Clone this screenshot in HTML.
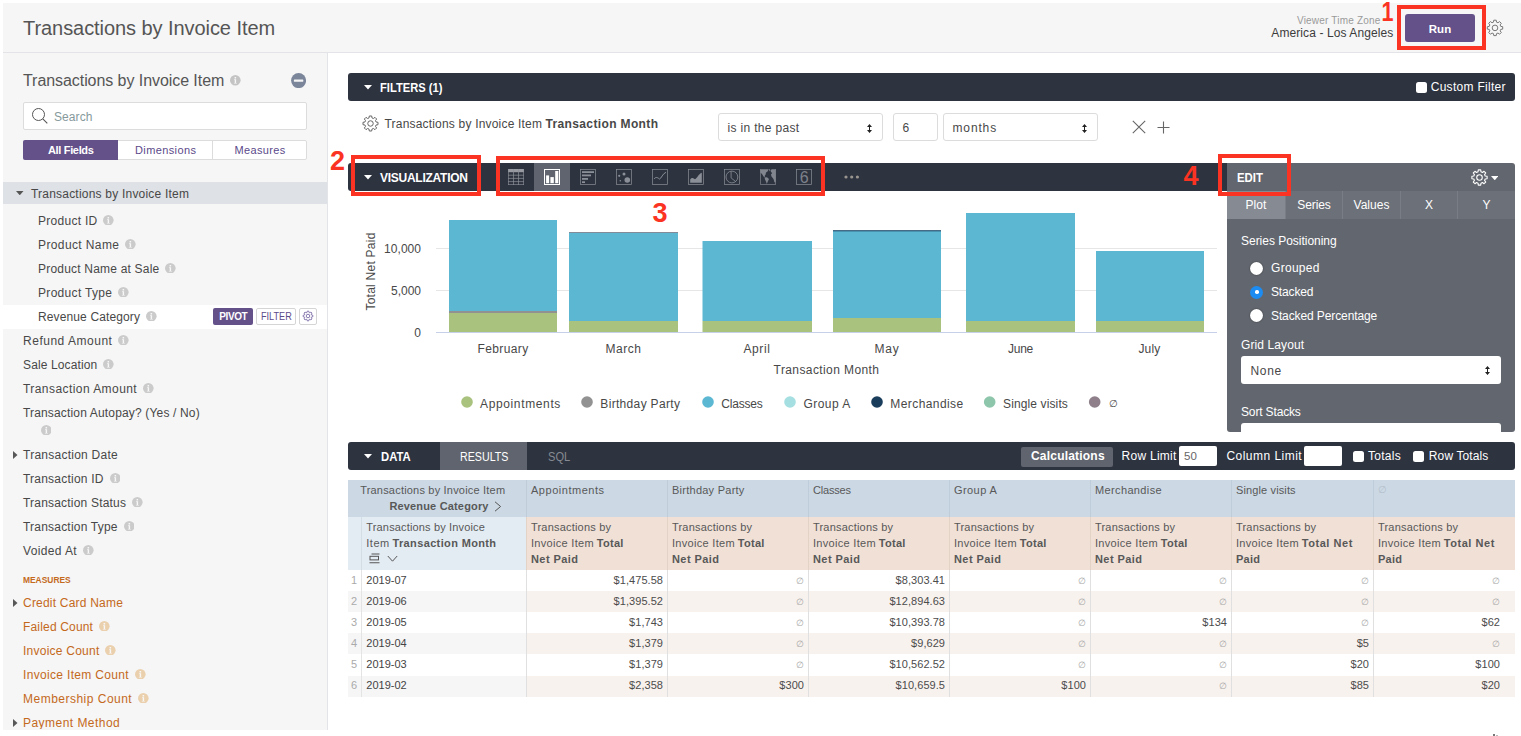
<!DOCTYPE html><html><head><meta charset="utf-8"><title>Transactions by Invoice Item</title><style>
*{box-sizing:border-box;margin:0;padding:0}
html,body{width:1521px;height:736px;overflow:hidden;background:#fff}
body{font-family:"Liberation Sans",sans-serif;font-size:12px;color:#444;position:relative}
.abs{position:absolute}
.nw{white-space:nowrap}
#hdr{left:3px;top:3px;width:1518px;height:50px;background:#f6f6f6;border-bottom:1px solid #e2e4e7}
#side{left:3px;top:53px;width:325px;height:677px;background:#f6f6f6;border-right:1px solid #e2e4e7}
.bar{background:#2d333f;height:28px;border-radius:3px;color:#fff}
.bt{font-weight:bold;font-size:12px;color:#fff;line-height:28px;top:1px}
.f{left:0;width:324px;height:24px;line-height:24px;font-size:12px;color:#484848;white-space:nowrap}
.f.m{color:#c4691c}
.f .i{display:inline-block;vertical-align:middle;margin-left:6px;position:relative;top:-1.8px}
.red{border:4px solid #fb3322}
.num{color:#fb3322;font-weight:bold;font-size:24px;line-height:24px}
.sel{background:#fff;border:1px solid #dcdcdc;border-radius:3px;height:28px;line-height:28px;font-size:12px;color:#484848}
.tab{top:191px;height:28px;line-height:28px;text-align:center;color:#fff;font-size:12px;background:#6c7078;border-left:1px solid #797d85}
.el{color:#fff;font-size:12px;line-height:14px}
.radio{width:13px;height:13px;border-radius:50%;background:#fff;box-shadow:0 0 1.5px rgba(0,0,0,.6)}
.cb{width:11px;height:11px;border-radius:2.5px;background:#fff}
.wl{color:#fff;font-size:12px;line-height:28px;top:0}
.c{font-size:11px;color:#4c4c4c;line-height:16px}
</style></head><body>
<div id="hdr" class="abs"></div>
<div class="abs nw" style="left:23px;top:15px;font-size:20px;line-height:26px;color:#555;letter-spacing:-0.063px;">Transactions by Invoice Item</div>
<div class="abs nw" style="left:1297px;top:15px;font-size:10px;line-height:12px;color:#9a9a9a;letter-spacing:0.193px;">Viewer Time Zone</div>
<div class="abs nw" style="left:1271.3px;top:26px;font-size:12px;line-height:15px;color:#3c3c3c;letter-spacing:0.095px;">America - Los Angeles</div>
<div class="abs" style="left:1405px;top:14px;width:70px;height:28px;background:#64518a;border-radius:3px;color:#fff;font-size:11.5px;font-weight:bold;text-align:center;line-height:30px">Run</div>
<svg class="abs" style="left:1485px;top:18px" width="20" height="20" viewBox="0 0 20 20" ><path d="M8.48 4.17 L8.78 2.20 L11.22 2.20 L11.52 4.17 L12.98 4.77 L14.58 3.59 L16.31 5.32 L15.13 6.92 L15.73 8.38 L17.70 8.68 L17.70 11.12 L15.73 11.42 L15.13 12.88 L16.31 14.48 L14.58 16.21 L12.98 15.03 L11.52 15.63 L11.22 17.60 L8.78 17.60 L8.48 15.63 L7.02 15.03 L5.42 16.21 L3.69 14.48 L4.87 12.88 L4.27 11.42 L2.30 11.12 L2.30 8.68 L4.27 8.38 L4.87 6.92 L3.69 5.32 L5.42 3.59 L7.02 4.77Z" fill="none" stroke="#777" stroke-width="1" stroke-linejoin="round"/><circle cx="10.00" cy="9.90" r="2.81" fill="none" stroke="#777" stroke-width="1"/></svg>
<div class="abs red" style="left:1397px;top:5px;width:89px;height:45px"></div>
<div class="abs num" style="left:1380px;top:-1px;font-size:27px;line-height:27px;transform:scaleX(.8);transform-origin:50% 50%">1</div>
<div id="side" class="abs"></div>
<div class="abs nw" style="left:23px;top:70px;font-size:16px;line-height:22px;color:#555;letter-spacing:-0.065px;">Transactions by Invoice Item</div>
<svg class="abs" style="left:230.4px;top:75.4px" width="10.6" height="10.6" viewBox="0 0 10.6 10.6" ><circle cx="5.3" cy="5.3" r="5.3" fill="#c4c4c4"/><path d="M4.1 4.3 H6.1 V7.9 H6.9 V8.6 H3.9 V7.9 H4.7 V5 H4.1Z M4.6 2.1 H6.1 V3.5 H4.6Z" fill="#f7f7f7"/></svg>
<svg class="abs" style="left:290.5px;top:72.6px" width="15.2" height="15.2" viewBox="0 0 15.2 15.2" ><circle cx="7.6" cy="7.6" r="7.5" fill="#7b869b"/><rect x="2.9" y="6.5" width="9.4" height="2.2" rx=".4" fill="#f5f5f5"/></svg>
<div class="abs" style="left:23px;top:102px;width:284px;height:28px;background:#fff;border:1px solid #dcdcdc;border-radius:2px"></div>
<svg class="abs" style="left:31px;top:107px" width="18" height="18" viewBox="0 0 18 18" ><circle cx="7.5" cy="7.5" r="6" fill="none" stroke="#555" stroke-width="1"/><path d="M11.8 11.8 L16.3 16.3" stroke="#555" stroke-width="1.1"/></svg>
<div class="abs nw" style="left:54px;top:109px;font-size:12px;line-height:16px;color:#869a9c;letter-spacing:0.086px;">Search</div>
<div class="abs" style="left:23px;top:140px;width:284px;height:20px;background:#fff;border:1px solid #dcdcdc;border-radius:2px"></div>
<div class="abs" style="left:23px;top:140px;width:95px;height:20px;background:#64518a;border-radius:2px 0 0 2px"></div>
<div class="abs" style="left:212px;top:140px;width:1px;height:20px;background:#dcdcdc"></div>
<div class="abs nw" style="left:48px;top:140px;font-size:11px;line-height:20px;font-weight:bold;color:#fff;letter-spacing:-0.336px;">All Fields</div>
<div class="abs nw" style="left:135px;top:140px;font-size:11px;line-height:20px;color:#5b4a8a;letter-spacing:0.379px;">Dimensions</div>
<div class="abs nw" style="left:234.5px;top:140px;font-size:11px;line-height:20px;color:#5b4a8a;letter-spacing:0.333px;">Measures</div>
<div class="abs" style="left:3px;top:182px;width:324px;height:22px;background:#dee1e5"></div>
<svg class="abs" style="left:16.3px;top:191px" width="7.5" height="4.3" viewBox="0 0 7.5 4.3" ><path d="M0 0 H7.5 L3.75 4.3 Z" fill="#555"/></svg>
<div class="abs nw" style="left:31px;top:183px;font-size:12px;line-height:22px;color:#484848;letter-spacing:0.21px;">Transactions by Invoice Item</div>
<div class="abs" style="left:3px;top:305px;width:324px;height:24px;background:#fff"></div>
<div class="abs f" style="top:209px;padding-left:38px;letter-spacing:0.279px;">Product ID<svg class="i" width="10.6" height="10.6" viewBox="0 0 10.6 10.6"><circle cx="5.3" cy="5.3" r="5.3" fill="#cbcbcb"/><path d="M4.1 4.3 H6.1 V7.9 H6.9 V8.6 H3.9 V7.9 H4.7 V5 H4.1Z M4.6 2.1 H6.1 V3.5 H4.6Z" fill="#f7f7f7"/></svg></div>
<div class="abs f" style="top:233px;padding-left:38px;letter-spacing:0.387px;">Product Name<svg class="i" width="10.6" height="10.6" viewBox="0 0 10.6 10.6"><circle cx="5.3" cy="5.3" r="5.3" fill="#cbcbcb"/><path d="M4.1 4.3 H6.1 V7.9 H6.9 V8.6 H3.9 V7.9 H4.7 V5 H4.1Z M4.6 2.1 H6.1 V3.5 H4.6Z" fill="#f7f7f7"/></svg></div>
<div class="abs f" style="top:257px;padding-left:38px;letter-spacing:0.2px;">Product Name at Sale<svg class="i" width="10.6" height="10.6" viewBox="0 0 10.6 10.6"><circle cx="5.3" cy="5.3" r="5.3" fill="#cbcbcb"/><path d="M4.1 4.3 H6.1 V7.9 H6.9 V8.6 H3.9 V7.9 H4.7 V5 H4.1Z M4.6 2.1 H6.1 V3.5 H4.6Z" fill="#f7f7f7"/></svg></div>
<div class="abs f" style="top:281px;padding-left:38px;letter-spacing:0.315px;">Product Type<svg class="i" width="10.6" height="10.6" viewBox="0 0 10.6 10.6"><circle cx="5.3" cy="5.3" r="5.3" fill="#cbcbcb"/><path d="M4.1 4.3 H6.1 V7.9 H6.9 V8.6 H3.9 V7.9 H4.7 V5 H4.1Z M4.6 2.1 H6.1 V3.5 H4.6Z" fill="#f7f7f7"/></svg></div>
<div class="abs f" style="top:305px;padding-left:38px;letter-spacing:0.126px;">Revenue Category<svg class="i" width="10.6" height="10.6" viewBox="0 0 10.6 10.6"><circle cx="5.3" cy="5.3" r="5.3" fill="#cbcbcb"/><path d="M4.1 4.3 H6.1 V7.9 H6.9 V8.6 H3.9 V7.9 H4.7 V5 H4.1Z M4.6 2.1 H6.1 V3.5 H4.6Z" fill="#f7f7f7"/></svg></div>
<div class="abs f" style="top:329px;padding-left:23px;letter-spacing:0.519px;">Refund Amount<svg class="i" width="10.6" height="10.6" viewBox="0 0 10.6 10.6"><circle cx="5.3" cy="5.3" r="5.3" fill="#cbcbcb"/><path d="M4.1 4.3 H6.1 V7.9 H6.9 V8.6 H3.9 V7.9 H4.7 V5 H4.1Z M4.6 2.1 H6.1 V3.5 H4.6Z" fill="#f7f7f7"/></svg></div>
<div class="abs f" style="top:353px;padding-left:23px;letter-spacing:0.123px;">Sale Location<svg class="i" width="10.6" height="10.6" viewBox="0 0 10.6 10.6"><circle cx="5.3" cy="5.3" r="5.3" fill="#cbcbcb"/><path d="M4.1 4.3 H6.1 V7.9 H6.9 V8.6 H3.9 V7.9 H4.7 V5 H4.1Z M4.6 2.1 H6.1 V3.5 H4.6Z" fill="#f7f7f7"/></svg></div>
<div class="abs f" style="top:377px;padding-left:23px;letter-spacing:0.437px;">Transaction Amount<svg class="i" width="10.6" height="10.6" viewBox="0 0 10.6 10.6"><circle cx="5.3" cy="5.3" r="5.3" fill="#cbcbcb"/><path d="M4.1 4.3 H6.1 V7.9 H6.9 V8.6 H3.9 V7.9 H4.7 V5 H4.1Z M4.6 2.1 H6.1 V3.5 H4.6Z" fill="#f7f7f7"/></svg></div>
<div class="abs f" style="top:401px;padding-left:23px;letter-spacing:0.161px;">Transaction Autopay? (Yes / No)</div>
<div class="abs f" style="top:443px;padding-left:23px;letter-spacing:0.251px;">Transaction Date</div>
<svg class="abs" style="left:13px;top:450.5px" width="5" height="8" viewBox="0 0 5 8" ><path d="M0 0 L4.5 4 L0 8Z" fill="#585858"/></svg>
<div class="abs f" style="top:467px;padding-left:23px;letter-spacing:0.22px;">Transaction ID<svg class="i" width="10.6" height="10.6" viewBox="0 0 10.6 10.6"><circle cx="5.3" cy="5.3" r="5.3" fill="#cbcbcb"/><path d="M4.1 4.3 H6.1 V7.9 H6.9 V8.6 H3.9 V7.9 H4.7 V5 H4.1Z M4.6 2.1 H6.1 V3.5 H4.6Z" fill="#f7f7f7"/></svg></div>
<div class="abs f" style="top:491px;padding-left:23px;letter-spacing:0.197px;">Transaction Status<svg class="i" width="10.6" height="10.6" viewBox="0 0 10.6 10.6"><circle cx="5.3" cy="5.3" r="5.3" fill="#cbcbcb"/><path d="M4.1 4.3 H6.1 V7.9 H6.9 V8.6 H3.9 V7.9 H4.7 V5 H4.1Z M4.6 2.1 H6.1 V3.5 H4.6Z" fill="#f7f7f7"/></svg></div>
<div class="abs f" style="top:515px;padding-left:23px;letter-spacing:0.205px;">Transaction Type<svg class="i" width="10.6" height="10.6" viewBox="0 0 10.6 10.6"><circle cx="5.3" cy="5.3" r="5.3" fill="#cbcbcb"/><path d="M4.1 4.3 H6.1 V7.9 H6.9 V8.6 H3.9 V7.9 H4.7 V5 H4.1Z M4.6 2.1 H6.1 V3.5 H4.6Z" fill="#f7f7f7"/></svg></div>
<div class="abs f" style="top:539px;padding-left:23px;letter-spacing:0.368px;">Voided At<svg class="i" width="10.6" height="10.6" viewBox="0 0 10.6 10.6"><circle cx="5.3" cy="5.3" r="5.3" fill="#cbcbcb"/><path d="M4.1 4.3 H6.1 V7.9 H6.9 V8.6 H3.9 V7.9 H4.7 V5 H4.1Z M4.6 2.1 H6.1 V3.5 H4.6Z" fill="#f7f7f7"/></svg></div>
<div class="abs f m" style="top:591px;padding-left:23px;letter-spacing:0.21px;">Credit Card Name</div>
<svg class="abs" style="left:13px;top:598.5px" width="5" height="8" viewBox="0 0 5 8" ><path d="M0 0 L4.5 4 L0 8Z" fill="#585858"/></svg>
<div class="abs f m" style="top:615px;padding-left:23px;letter-spacing:0.174px;">Failed Count<svg class="i" width="10.6" height="10.6" viewBox="0 0 10.6 10.6"><circle cx="5.3" cy="5.3" r="5.3" fill="#ebd0ae"/><path d="M4.1 4.3 H6.1 V7.9 H6.9 V8.6 H3.9 V7.9 H4.7 V5 H4.1Z M4.6 2.1 H6.1 V3.5 H4.6Z" fill="#f7f7f7"/></svg></div>
<div class="abs f m" style="top:639px;padding-left:23px;letter-spacing:0.239px;">Invoice Count<svg class="i" width="10.6" height="10.6" viewBox="0 0 10.6 10.6"><circle cx="5.3" cy="5.3" r="5.3" fill="#ebd0ae"/><path d="M4.1 4.3 H6.1 V7.9 H6.9 V8.6 H3.9 V7.9 H4.7 V5 H4.1Z M4.6 2.1 H6.1 V3.5 H4.6Z" fill="#f7f7f7"/></svg></div>
<div class="abs f m" style="top:663px;padding-left:23px;letter-spacing:0.332px;">Invoice Item Count<svg class="i" width="10.6" height="10.6" viewBox="0 0 10.6 10.6"><circle cx="5.3" cy="5.3" r="5.3" fill="#ebd0ae"/><path d="M4.1 4.3 H6.1 V7.9 H6.9 V8.6 H3.9 V7.9 H4.7 V5 H4.1Z M4.6 2.1 H6.1 V3.5 H4.6Z" fill="#f7f7f7"/></svg></div>
<div class="abs f m" style="top:687px;padding-left:23px;letter-spacing:0.488px;">Membership Count<svg class="i" width="10.6" height="10.6" viewBox="0 0 10.6 10.6"><circle cx="5.3" cy="5.3" r="5.3" fill="#ebd0ae"/><path d="M4.1 4.3 H6.1 V7.9 H6.9 V8.6 H3.9 V7.9 H4.7 V5 H4.1Z M4.6 2.1 H6.1 V3.5 H4.6Z" fill="#f7f7f7"/></svg></div>
<div class="abs f m" style="top:711px;padding-left:23px;letter-spacing:0.461px;height:18px;overflow:hidden;">Payment Method</div>
<svg class="abs" style="left:13px;top:718.5px" width="5" height="8" viewBox="0 0 5 8" ><path d="M0 0 L4.5 4 L0 8Z" fill="#585858"/></svg>
<svg class="abs" style="left:40.5px;top:424.7px" width="10.6" height="10.6" viewBox="0 0 10.6 10.6" ><circle cx="5.3" cy="5.3" r="5.3" fill="#cbcbcb"/><path d="M4.1 4.3 H6.1 V7.9 H6.9 V8.6 H3.9 V7.9 H4.7 V5 H4.1Z M4.6 2.1 H6.1 V3.5 H4.6Z" fill="#f7f7f7"/></svg>
<div class="abs nw" style="left:23.3px;top:574px;font-size:9px;transform:scaleX(0.935);transform-origin:0 50%;line-height:12px;font-weight:bold;color:#c4691c;">MEASURES</div>
<div class="abs" style="left:213px;top:308px;width:40px;height:17px;background:#64518a;border-radius:2px"></div>
<div class="abs nw" style="left:219.2px;top:307.5px;font-size:10px;line-height:17px;font-weight:bold;color:#fff;letter-spacing:-0.379px;">PIVOT</div>
<div class="abs" style="left:256px;top:308px;width:40px;height:17px;background:#fff;border:1px solid #d5d5d5;border-radius:2px"></div>
<div class="abs nw" style="left:261px;top:307.5px;font-size:10px;transform:scaleX(0.913);transform-origin:0 50%;line-height:17px;color:#5b4a8a;">FILTER</div>
<div class="abs" style="left:299px;top:308px;width:18px;height:17px;background:#fff;border:1px solid #d5d5d5;border-radius:2px"></div>
<svg class="abs" style="left:302px;top:310.3px" width="12" height="12" viewBox="0 0 12 12" ><path d="M5.05 2.40 L5.23 1.16 L6.77 1.16 L6.95 2.40 L7.87 2.78 L8.88 2.04 L9.96 3.12 L9.22 4.13 L9.60 5.05 L10.84 5.23 L10.84 6.77 L9.60 6.95 L9.22 7.87 L9.96 8.88 L8.88 9.96 L7.87 9.22 L6.95 9.60 L6.77 10.84 L5.23 10.84 L5.05 9.60 L4.13 9.22 L3.12 9.96 L2.04 8.88 L2.78 7.87 L2.40 6.95 L1.16 6.77 L1.16 5.23 L2.40 5.05 L2.78 4.13 L2.04 3.12 L3.12 2.04 L4.13 2.78Z" fill="none" stroke="#7a6aa6" stroke-width="0.9" stroke-linejoin="round"/><circle cx="6.00" cy="6.00" r="1.76" fill="none" stroke="#7a6aa6" stroke-width="0.9"/></svg>
<div class="abs bar" style="left:348px;top:73px;width:1167px"><svg class="abs" style="left:16px;top:12px" width="8" height="4.5" viewBox="0 0 8 4.5" ><path d="M0 0 H8 L4.0 4.5 Z" fill="#fff"/></svg><div class="abs nw" style="left:32px;top:1px;font-size:12px;transform:scaleX(0.931);transform-origin:0 50%;line-height:28px;font-weight:bold;color:#fff;">FILTERS (1)</div><div class="abs cb" style="left:1067.5px;top:8.5px"></div><div class="abs nw" style="left:1082.7px;top:0px;font-size:12px;line-height:28px;color:#fff;letter-spacing:0.293px;">Custom Filter</div></div>
<svg class="abs" style="left:360.5px;top:113.5px" width="19" height="19" viewBox="0 0 19 19" ><path d="M8.02 3.92 L8.31 1.99 L10.69 1.99 L10.98 3.92 L12.40 4.51 L13.97 3.35 L15.65 5.03 L14.49 6.60 L15.08 8.02 L17.01 8.31 L17.01 10.69 L15.08 10.98 L14.49 12.40 L15.65 13.97 L13.97 15.65 L12.40 14.49 L10.98 15.08 L10.69 17.01 L8.31 17.01 L8.02 15.08 L6.60 14.49 L5.03 15.65 L3.35 13.97 L4.51 12.40 L3.92 10.98 L1.99 10.69 L1.99 8.31 L3.92 8.02 L4.51 6.60 L3.35 5.03 L5.03 3.35 L6.60 4.51Z" fill="none" stroke="#666" stroke-width="1" stroke-linejoin="round"/><circle cx="9.50" cy="9.50" r="2.74" fill="none" stroke="#666" stroke-width="1"/></svg>
<div class="abs nw" style="left:384.5px;top:116px;font-size:12px;line-height:16px;color:#484848;letter-spacing:0.191px;">Transactions by Invoice Item</div>
<div class="abs nw" style="left:545.5px;top:116px;font-size:12px;line-height:16px;font-weight:bold;color:#484848;letter-spacing:0.362px;">Transaction Month</div>
<div class="abs sel" style="left:718px;top:113px;width:165px;padding-left:8.5px;letter-spacing:0.33px">is in the past<svg class="abs" style="left:148px;top:9.5px" width="5" height="9" viewBox="0 0 5 9"><path d="M2.5 0 L5 3 L3 3 L3 6 L5 6 L2.5 9 L0 6 L2 6 L2 3 L0 3Z" fill="#222"/></svg></div>
<div class="abs sel" style="left:893px;top:113px;width:45px;padding-left:8.5px">6</div>
<div class="abs sel" style="left:943px;top:113px;width:155px;padding-left:8.5px;letter-spacing:0.86px">months<svg class="abs" style="left:138px;top:9.5px" width="5" height="9" viewBox="0 0 5 9"><path d="M2.5 0 L5 3 L3 3 L3 6 L5 6 L2.5 9 L0 6 L2 6 L2 3 L0 3Z" fill="#222"/></svg></div>
<svg class="abs" style="left:1132px;top:120px" width="14" height="14" viewBox="0 0 14 14" ><path d="M.8 .8 L13.2 13.2 M13.2 .8 L.8 13.2" stroke="#666" stroke-width="1.1"/></svg>
<svg class="abs" style="left:1157px;top:120.5px" width="13" height="13" viewBox="0 0 13 13" ><path d="M6.5 .5 V12.5 M.5 6.5 H12.5" stroke="#666" stroke-width="1.1"/></svg>
<div class="abs bar" style="left:348px;top:163px;width:879px;border-radius:3px 0 0 3px"><svg class="abs" style="left:16px;top:12px" width="8" height="4.5" viewBox="0 0 8 4.5" ><path d="M0 0 H8 L4.0 4.5 Z" fill="#fff"/></svg><div class="abs nw" style="left:32px;top:1px;font-size:12px;line-height:28px;font-weight:bold;color:#fff;letter-spacing:-0.262px;">VISUALIZATION</div><div class="abs" style="left:186px;top:0;width:36px;height:28px;background:#5f646e"></div></div>
<svg class="abs" style="left:508px;top:169px" width="16" height="16" viewBox="0 0 16 16" ><rect x="0" y="0" width="16" height="3.2" fill="#979aa1"/><path d="M0 6.2 H16" stroke="#8b8f97" stroke-width=".7"/><path d="M0 9.4 H16" stroke="#8b8f97" stroke-width=".7"/><path d="M0 12.6 H16" stroke="#8b8f97" stroke-width=".7"/><path d="M0 15.6 H16" stroke="#8b8f97" stroke-width=".7"/><path d="M0.4 0 V16" stroke="#8b8f97" stroke-width=".7"/><path d="M5.5 0 V16" stroke="#8b8f97" stroke-width=".7"/><path d="M10.5 0 V16" stroke="#8b8f97" stroke-width=".7"/><path d="M15.6 0 V16" stroke="#8b8f97" stroke-width=".7"/></svg>
<svg class="abs" style="left:544px;top:169px" width="16" height="16" viewBox="0 0 16 16" ><rect x=".5" y=".5" width="15" height="15" fill="none" stroke="#fff" stroke-width="1"/><rect x="2.1" y="6.4" width="3" height="7.8" fill="#fff"/><rect x="6.4" y="8.1" width="3.4" height="6.1" fill="#fff"/><rect x="11.2" y="2" width="3.1" height="12.2" fill="#fff"/></svg>
<svg class="abs" style="left:580px;top:169px" width="16" height="16" viewBox="0 0 16 16" ><rect x=".4" y=".4" width="15.2" height="15.2" fill="none" stroke="#8b8f97" stroke-width=".7"/><rect x="2" y="2.2" width="12" height="1.8" fill="#8b8f97"/><rect x="2" y="5.5" width="9" height="1.8" fill="#8b8f97"/><rect x="2" y="9" width="6" height="1.8" fill="#8b8f97"/><rect x="2" y="12.3" width="3" height="1.7" fill="#8b8f97"/></svg>
<svg class="abs" style="left:616px;top:169px" width="16" height="16" viewBox="0 0 16 16" ><rect x=".5" y=".5" width="15" height="15" fill="none" stroke="#8b8f97" stroke-width=".7"/><circle cx="11.3" cy="11" r="2.8" fill="#8b8f97"/><circle cx="8" cy="5" r="1.5" fill="#8b8f97"/><circle cx="3.2" cy="6.8" r="1.1" fill="#8b8f97"/><circle cx="4.3" cy="11.8" r=".8" fill="#8b8f97"/></svg>
<svg class="abs" style="left:652px;top:169px" width="16" height="16" viewBox="0 0 16 16" ><rect x=".5" y=".5" width="15" height="15" fill="none" stroke="#8b8f97" stroke-width=".7"/><path d="M2 10 C4 7.5 5.5 8.5 7.5 10 C9.5 9.5 10.5 4.5 14 3.3" fill="none" stroke="#8b8f97" stroke-width="1"/></svg>
<svg class="abs" style="left:688px;top:169px" width="16" height="16" viewBox="0 0 16 16" ><rect x=".5" y=".5" width="15" height="15" fill="none" stroke="#8b8f97" stroke-width=".7"/><path d="M2.2 13.8 V10.5 C4 8 5.5 9 7 10.2 C9 9.5 10.5 5 13.8 3.8 V13.8Z" fill="#8b8f97"/></svg>
<svg class="abs" style="left:724px;top:169px" width="16" height="16" viewBox="0 0 16 16" ><rect x=".4" y=".4" width="15.2" height="15.2" fill="none" stroke="#8b8f97" stroke-width=".7"/><circle cx="7.9" cy="8" r="5.9" fill="none" stroke="#8b8f97" stroke-width=".8"/><path d="M7.1 2.3 V8.9 L11.7 12.6" fill="none" stroke="#8b8f97" stroke-width=".8"/></svg>
<svg class="abs" style="left:760px;top:169px" width="16" height="16" viewBox="0 0 16 16" ><path d="M.4 0 V15.6 H15.6 V0" fill="none" stroke="#8b8f97" stroke-width=".7"/><path d="M.4 .3 H8.6 L7.5 2.5 L6 3.5 L5.6 5.5 L4.6 7 L5.2 8.6 L3.5 7.5 L2 5 L.4 3.6Z M8.8 .3 H10.2 L9.2 2.4Z M4.6 8.6 L7 8.2 L9 10 L8 12 L6.8 15 L6 12.5 L5 10.5Z M10.5 1 L12 .3 H15.6 V13 L14.5 13.6 L13.5 10 L11.5 7.6 L11 5.5 L12.2 4 L11 3Z" fill="#8b8f97" fill-opacity=".9"/></svg>
<svg class="abs" style="left:796px;top:169px" width="16" height="16" viewBox="0 0 16 16" ><rect x=".5" y=".5" width="15" height="15" fill="none" stroke="#8b8f97" stroke-width=".7"/><text x="8.2" y="13.9" font-family="Liberation Sans,sans-serif" font-size="16" fill="#7d818a" text-anchor="middle">6</text></svg>
<svg class="abs" style="left:844px;top:175px" width="17" height="4" viewBox="0 0 17 4" ><circle cx="2" cy="2" r="1.6" fill="#9a958f"/><circle cx="7.7" cy="2" r="1.6" fill="#9a958f"/><circle cx="13.4" cy="2" r="1.6" fill="#9a958f"/></svg>
<div class="abs red" style="left:351px;top:155px;width:130px;height:41px"></div>
<div class="abs red" style="left:496px;top:156px;width:329px;height:40px"></div>
<div class="abs num" style="left:330px;top:148px;font-size:27px;line-height:27px">2</div>
<div class="abs num" style="left:652.5px;top:200px;font-size:27px;line-height:27px">3</div>
<div class="abs num" style="left:1183.5px;top:162.5px;font-size:27px;line-height:27px">4</div>
<svg class="abs" style="left:0;top:0" width="1227" height="440" viewBox="0 0 1227 440"><g stroke="#e6e6e6" stroke-width="1"><path d="M436 248.5 H1217 M436 290.5 H1217"/></g><rect x="449" y="220" width="108" height="93" fill="#5cb7d3"/><rect x="449" y="313" width="108" height="19.0" fill="#a9c27d"/><rect x="449" y="311" width="108" height="2" fill="#919191"/><rect x="569" y="232" width="109" height="89" fill="#5cb7d3"/><rect x="569" y="321" width="109" height="11.0" fill="#a9c27d"/><rect x="569" y="232" width="109" height="0.8" fill="#8e7f8a"/><rect x="702.5" y="241" width="109.5" height="80" fill="#5cb7d3"/><rect x="702.5" y="321" width="109.5" height="11.0" fill="#a9c27d"/><rect x="833" y="230.5" width="108" height="87.5" fill="#5cb7d3"/><rect x="833" y="318" width="108" height="14.0" fill="#a9c27d"/><rect x="833" y="230.3" width="108" height="1.0" fill="#1b3d5c"/><rect x="966" y="213" width="109" height="108" fill="#5cb7d3"/><rect x="966" y="321" width="109" height="11.0" fill="#a9c27d"/><rect x="1096" y="251" width="108" height="70" fill="#5cb7d3"/><rect x="1096" y="321" width="108" height="11.0" fill="#a9c27d"/><path d="M436 332.5 H1217" stroke="#c6d0e8" stroke-width="1"/><text x="421" y="252.5" text-anchor="end" font-family="Liberation Sans,sans-serif" font-size="12" fill="#484848" letter-spacing="0.031" >10,000</text><text x="421" y="294.5" text-anchor="end" font-family="Liberation Sans,sans-serif" font-size="12" fill="#484848" letter-spacing="-0.018" >5,000</text><text x="421" y="336.5" text-anchor="end" font-family="Liberation Sans,sans-serif" font-size="12" fill="#484848" letter-spacing="0" >0</text><text x="503" y="353" text-anchor="middle" font-family="Liberation Sans,sans-serif" font-size="12" fill="#484848" letter-spacing="0.376" >February</text><text x="623.5" y="353" text-anchor="middle" font-family="Liberation Sans,sans-serif" font-size="12" fill="#484848" letter-spacing="0.579" >March</text><text x="757" y="353" text-anchor="middle" font-family="Liberation Sans,sans-serif" font-size="12" fill="#484848" letter-spacing="0.636" >April</text><text x="887" y="353" text-anchor="middle" font-family="Liberation Sans,sans-serif" font-size="12" fill="#484848" letter-spacing="0.844" >May</text><text x="1020.5" y="353" text-anchor="middle" font-family="Liberation Sans,sans-serif" font-size="12" fill="#484848" letter-spacing="-0.224" >June</text><text x="1149.5" y="353" text-anchor="middle" font-family="Liberation Sans,sans-serif" font-size="12" fill="#484848" letter-spacing="0.205" >July</text><text x="826.5" y="373.5" text-anchor="middle" font-family="Liberation Sans,sans-serif" font-size="12" fill="#484848" letter-spacing="0.401" >Transaction Month</text><text x="0" y="0" text-anchor="middle" font-family="Liberation Sans,sans-serif" font-size="12" fill="#484848" letter-spacing="0.249" transform="translate(375,271.5) rotate(-90)">Total Net Paid</text><circle cx="467" cy="402" r="5.8" fill="#a9c27d"/><text x="480" y="407.5" text-anchor="start" font-family="Liberation Sans,sans-serif" font-size="12" fill="#484848" letter-spacing="0.634" >Appointments</text><circle cx="587" cy="402" r="5.8" fill="#929292"/><text x="600.3" y="407.5" text-anchor="start" font-family="Liberation Sans,sans-serif" font-size="12" fill="#484848" letter-spacing="0.33" >Birthday Party</text><circle cx="708" cy="402" r="5.8" fill="#5cb7d3"/><text x="721.3" y="407.5" text-anchor="start" font-family="Liberation Sans,sans-serif" font-size="12" fill="#484848" letter-spacing="-0.188" >Classes</text><circle cx="790" cy="402" r="5.8" fill="#a6dfe1"/><text x="803.4" y="407.5" text-anchor="start" font-family="Liberation Sans,sans-serif" font-size="12" fill="#484848" letter-spacing="0.488" >Group A</text><circle cx="877" cy="402" r="5.8" fill="#1b3d5c"/><text x="890.3" y="407.5" text-anchor="start" font-family="Liberation Sans,sans-serif" font-size="12" fill="#484848" letter-spacing="0.416" >Merchandise</text><circle cx="989.7" cy="402" r="5.8" fill="#8ec6ac"/><text x="1003" y="407.5" text-anchor="start" font-family="Liberation Sans,sans-serif" font-size="12" fill="#484848" letter-spacing="0.125" >Single visits</text><circle cx="1094.7" cy="402" r="5.8" fill="#8e7f8a"/><text x="1108.5" y="407" font-family="Liberation Sans,sans-serif" font-size="10" fill="#484848">∅</text></svg>
<div class="abs" style="left:1227px;top:163px;width:288px;height:269px;background:#62666e;border-radius:0 3px 3px 3px;overflow:hidden"><div class="abs" style="left:14px;top:259.5px;width:260px;height:28px;background:#fff;border-radius:3px"></div></div>
<div class="abs nw" style="left:1237.4px;top:164px;font-size:12px;transform:scaleX(0.949);transform-origin:0 50%;line-height:28px;font-weight:bold;color:#fff;">EDIT</div>
<svg class="abs" style="left:1470px;top:167.5px" width="19" height="19" viewBox="0 0 19 19" ><path d="M8.00 3.84 L8.30 1.89 L10.70 1.89 L11.00 3.84 L12.44 4.44 L14.03 3.27 L15.73 4.97 L14.56 6.56 L15.16 8.00 L17.11 8.30 L17.11 10.70 L15.16 11.00 L14.56 12.44 L15.73 14.03 L14.03 15.73 L12.44 14.56 L11.00 15.16 L10.70 17.11 L8.30 17.11 L8.00 15.16 L6.56 14.56 L4.97 15.73 L3.27 14.03 L4.44 12.44 L3.84 11.00 L1.89 10.70 L1.89 8.30 L3.84 8.00 L4.44 6.56 L3.27 4.97 L4.97 3.27 L6.56 4.44Z" fill="none" stroke="#fff" stroke-width="1.1" stroke-linejoin="round"/><circle cx="9.50" cy="9.50" r="2.77" fill="none" stroke="#fff" stroke-width="1.1"/></svg>
<svg class="abs" style="left:1490.5px;top:175.5px" width="7.5" height="4.3" viewBox="0 0 7.5 4.3" ><path d="M0 0 H7.5 L3.75 4.3 Z" fill="#fff"/></svg>
<div class="abs tab" style="left:1227px;width:58px;letter-spacing:0.091px;background:#868a92;border-left:none;">Plot</div>
<div class="abs tab" style="left:1285px;width:57px;letter-spacing:-0.111px;">Series</div>
<div class="abs tab" style="left:1342px;width:58px;letter-spacing:0.009px;">Values</div>
<div class="abs tab" style="left:1400px;width:57px;letter-spacing:0px;">X</div>
<div class="abs tab" style="left:1457px;width:58px;letter-spacing:0px;">Y</div>
<div class="abs nw" style="left:1241px;top:234px;font-size:12px;line-height:14px;color:#fff;letter-spacing:-0.024px;">Series Positioning</div>
<div class="abs radio" style="left:1250.3px;top:261.5px"></div>
<div class="abs nw" style="left:1271px;top:261px;font-size:12px;line-height:14px;color:#fff;letter-spacing:0.293px;">Grouped</div>
<div class="abs radio" style="left:1250.3px;top:285.5px;background:#1d8cf2;box-shadow:none"><div class="abs" style="left:4.75px;top:4.75px;width:3.5px;height:3.5px;border-radius:50%;background:#fff"></div></div>
<div class="abs nw" style="left:1271px;top:285px;font-size:12px;line-height:14px;color:#fff;letter-spacing:-0.15px;">Stacked</div>
<div class="abs radio" style="left:1250.3px;top:309.0px"></div>
<div class="abs nw" style="left:1271px;top:308.5px;font-size:12px;line-height:14px;color:#fff;letter-spacing:-0.107px;">Stacked Percentage</div>
<div class="abs nw" style="left:1241px;top:338px;font-size:12px;line-height:14px;color:#fff;letter-spacing:0.101px;">Grid Layout</div>
<div class="abs sel" style="left:1241px;top:356px;width:260px;border:none;line-height:31px;padding-left:9.5px;letter-spacing:0.691px">None<svg class="abs" style="left:244px;top:9.5px" width="5" height="9" viewBox="0 0 5 9"><path d="M2.5 0 L5 3 L3 3 L3 6 L5 6 L2.5 9 L0 6 L2 6 L2 3 L0 3Z" fill="#222"/></svg></div>
<div class="abs nw" style="left:1241px;top:405px;font-size:12px;line-height:14px;color:#fff;letter-spacing:-0.15px;">Sort Stacks</div>
<div class="abs red" style="left:1218px;top:154px;width:73px;height:42px"></div>
<div class="abs bar" style="left:348px;top:442px;width:1167px"><svg class="abs" style="left:16px;top:12px" width="8" height="4.5" viewBox="0 0 8 4.5" ><path d="M0 0 H8 L4.0 4.5 Z" fill="#fff"/></svg><div class="abs nw" style="left:32.5px;top:1px;font-size:12px;transform:scaleX(0.942);transform-origin:0 50%;line-height:28px;font-weight:bold;color:#fff;">DATA</div><div class="abs" style="left:92px;top:0;width:87px;height:28px;background:#5f646e"></div><div class="abs nw" style="left:111.5px;top:1px;font-size:12px;transform:scaleX(0.89);transform-origin:0 50%;line-height:28px;color:#fff;">RESULTS</div><div class="abs nw" style="left:199.5px;top:1px;font-size:12px;transform:scaleX(0.925);transform-origin:0 50%;line-height:28px;color:#868a92;">SQL</div><div class="abs" style="left:673px;top:5px;width:92px;height:19.5px;background:#5f646e;border-radius:2px"></div><div class="abs nw" style="left:683px;top:0px;font-size:12px;line-height:29px;font-weight:bold;color:#fff;letter-spacing:0.2px;">Calculations</div><div class="abs nw" style="left:773.6px;top:0px;font-size:12px;line-height:28px;color:#fff;letter-spacing:0.259px;">Row Limit</div><div class="abs" style="left:831px;top:4px;width:38px;height:20px;background:#fff;border-radius:2px;color:#666;font-size:11.5px;line-height:21px;padding-left:5px">50</div><div class="abs nw" style="left:878.4px;top:0px;font-size:12px;line-height:28px;color:#fff;letter-spacing:0.475px;">Column Limit</div><div class="abs" style="left:956px;top:4px;width:38px;height:20px;background:#fff;border-radius:2px"></div><div class="abs cb" style="left:1004.7px;top:8.5px"></div><div class="abs nw" style="left:1020px;top:0px;font-size:12px;line-height:28px;color:#fff;letter-spacing:0.28px;">Totals</div><div class="abs cb" style="left:1065.4px;top:8.5px"></div><div class="abs nw" style="left:1080.8px;top:0px;font-size:12px;line-height:28px;color:#fff;letter-spacing:0.12px;">Row Totals</div></div>
<div class="abs" style="left:348px;top:480px;width:1167px;height:37px;background:#ccd9e5"></div>
<div class="abs" style="left:348px;top:516.7px;width:178px;height:53.3px;background:#e4ecf3"></div>
<div class="abs" style="left:526px;top:516.7px;width:989px;height:53.3px;background:#f0e0d6"></div>
<div class="abs" style="left:348px;top:591.1px;width:178px;height:21.1px;background:#f6f6f7"></div>
<div class="abs" style="left:526px;top:591.1px;width:989px;height:21.1px;background:#f8f2ee"></div>
<div class="abs" style="left:348px;top:633.3px;width:178px;height:21.1px;background:#f6f6f7"></div>
<div class="abs" style="left:526px;top:633.3px;width:989px;height:21.1px;background:#f8f2ee"></div>
<div class="abs" style="left:348px;top:675.5px;width:178px;height:21.1px;background:#f6f6f7"></div>
<div class="abs" style="left:526px;top:675.5px;width:989px;height:21.1px;background:#f8f2ee"></div>
<div class="abs" style="left:361px;top:517px;width:1px;height:53px;background:#d3dde6"></div>
<div class="abs" style="left:361px;top:570px;width:1px;height:126.6px;background:#e4e4e4"></div>
<div class="abs" style="left:526px;top:480px;width:1px;height:37px;background:#bfccda"></div>
<div class="abs" style="left:526px;top:517px;width:1px;height:53px;background:#e3d2c6"></div>
<div class="abs" style="left:526px;top:570px;width:1px;height:126.6px;background:#e0e0e0"></div>
<div class="abs" style="left:667px;top:480px;width:1px;height:37px;background:#bfccda"></div>
<div class="abs" style="left:667px;top:517px;width:1px;height:53px;background:#e3d2c6"></div>
<div class="abs" style="left:667px;top:570px;width:1px;height:126.6px;background:#e0e0e0"></div>
<div class="abs" style="left:808px;top:480px;width:1px;height:37px;background:#bfccda"></div>
<div class="abs" style="left:808px;top:517px;width:1px;height:53px;background:#e3d2c6"></div>
<div class="abs" style="left:808px;top:570px;width:1px;height:126.6px;background:#e0e0e0"></div>
<div class="abs" style="left:949px;top:480px;width:1px;height:37px;background:#bfccda"></div>
<div class="abs" style="left:949px;top:517px;width:1px;height:53px;background:#e3d2c6"></div>
<div class="abs" style="left:949px;top:570px;width:1px;height:126.6px;background:#e0e0e0"></div>
<div class="abs" style="left:1090px;top:480px;width:1px;height:37px;background:#bfccda"></div>
<div class="abs" style="left:1090px;top:517px;width:1px;height:53px;background:#e3d2c6"></div>
<div class="abs" style="left:1090px;top:570px;width:1px;height:126.6px;background:#e0e0e0"></div>
<div class="abs" style="left:1231px;top:480px;width:1px;height:37px;background:#bfccda"></div>
<div class="abs" style="left:1231px;top:517px;width:1px;height:53px;background:#e3d2c6"></div>
<div class="abs" style="left:1231px;top:570px;width:1px;height:126.6px;background:#e0e0e0"></div>
<div class="abs" style="left:1373px;top:480px;width:1px;height:37px;background:#bfccda"></div>
<div class="abs" style="left:1373px;top:517px;width:1px;height:53px;background:#e3d2c6"></div>
<div class="abs" style="left:1373px;top:570px;width:1px;height:126.6px;background:#e0e0e0"></div>
<div class="abs nw" style="left:360.2px;top:482px;font-size:11px;line-height:16px;color:#585858;letter-spacing:0.195px;">Transactions by Invoice Item</div>
<div class="abs nw" style="left:389.4px;top:498px;font-size:11px;line-height:16px;font-weight:bold;color:#585858;letter-spacing:0.166px;">Revenue Category</div>
<svg class="abs" style="left:494px;top:501px" width="8" height="11" viewBox="0 0 8 11" ><path d="M1 .8 L6.6 5.5 L1 10.2" fill="none" stroke="#555" stroke-width="1"/></svg>
<div class="abs nw" style="left:531px;top:482px;font-size:11px;line-height:16px;color:#585858;letter-spacing:0.529px;">Appointments</div>
<div class="abs nw" style="left:531px;top:518.5px;font-size:11px;line-height:16px;color:#585858;letter-spacing:0.195px;">Transactions by</div>
<div class="abs nw" style="left:531px;top:534.5px;font-size:11px;line-height:16px;color:#585858;letter-spacing:0.297px;">Invoice Item</div>
<div class="abs nw" style="left:596.7px;top:534.5px;font-size:11px;line-height:16px;font-weight:bold;color:#585858;letter-spacing:0.303px;">Total</div>
<div class="abs nw" style="left:531px;top:550.5px;font-size:11px;line-height:16px;font-weight:bold;color:#585858;letter-spacing:0.409px;">Net Paid</div>
<div class="abs nw" style="left:672px;top:482px;font-size:11px;line-height:16px;color:#585858;letter-spacing:0.253px;">Birthday Party</div>
<div class="abs nw" style="left:672px;top:518.5px;font-size:11px;line-height:16px;color:#585858;letter-spacing:0.195px;">Transactions by</div>
<div class="abs nw" style="left:672px;top:534.5px;font-size:11px;line-height:16px;color:#585858;letter-spacing:0.297px;">Invoice Item</div>
<div class="abs nw" style="left:737.7px;top:534.5px;font-size:11px;line-height:16px;font-weight:bold;color:#585858;letter-spacing:0.303px;">Total</div>
<div class="abs nw" style="left:672px;top:550.5px;font-size:11px;line-height:16px;font-weight:bold;color:#585858;letter-spacing:0.409px;">Net Paid</div>
<div class="abs nw" style="left:813px;top:482px;font-size:11px;line-height:16px;color:#585858;letter-spacing:-0.207px;">Classes</div>
<div class="abs nw" style="left:813px;top:518.5px;font-size:11px;line-height:16px;color:#585858;letter-spacing:0.195px;">Transactions by</div>
<div class="abs nw" style="left:813px;top:534.5px;font-size:11px;line-height:16px;color:#585858;letter-spacing:0.297px;">Invoice Item</div>
<div class="abs nw" style="left:878.7px;top:534.5px;font-size:11px;line-height:16px;font-weight:bold;color:#585858;letter-spacing:0.303px;">Total</div>
<div class="abs nw" style="left:813px;top:550.5px;font-size:11px;line-height:16px;font-weight:bold;color:#585858;letter-spacing:0.409px;">Net Paid</div>
<div class="abs nw" style="left:954px;top:482px;font-size:11px;line-height:16px;color:#585858;letter-spacing:0.42px;">Group A</div>
<div class="abs nw" style="left:954px;top:518.5px;font-size:11px;line-height:16px;color:#585858;letter-spacing:0.195px;">Transactions by</div>
<div class="abs nw" style="left:954px;top:534.5px;font-size:11px;line-height:16px;color:#585858;letter-spacing:0.297px;">Invoice Item</div>
<div class="abs nw" style="left:1019.7px;top:534.5px;font-size:11px;line-height:16px;font-weight:bold;color:#585858;letter-spacing:0.303px;">Total</div>
<div class="abs nw" style="left:954px;top:550.5px;font-size:11px;line-height:16px;font-weight:bold;color:#585858;letter-spacing:0.409px;">Net Paid</div>
<div class="abs nw" style="left:1095px;top:482px;font-size:11px;line-height:16px;color:#585858;letter-spacing:0.365px;">Merchandise</div>
<div class="abs nw" style="left:1095px;top:518.5px;font-size:11px;line-height:16px;color:#585858;letter-spacing:0.195px;">Transactions by</div>
<div class="abs nw" style="left:1095px;top:534.5px;font-size:11px;line-height:16px;color:#585858;letter-spacing:0.297px;">Invoice Item</div>
<div class="abs nw" style="left:1160.7px;top:534.5px;font-size:11px;line-height:16px;font-weight:bold;color:#585858;letter-spacing:0.303px;">Total</div>
<div class="abs nw" style="left:1095px;top:550.5px;font-size:11px;line-height:16px;font-weight:bold;color:#585858;letter-spacing:0.409px;">Net Paid</div>
<div class="abs nw" style="left:1236px;top:482px;font-size:11px;line-height:16px;color:#585858;letter-spacing:0.125px;">Single visits</div>
<div class="abs nw" style="left:1236px;top:518.5px;font-size:11px;line-height:16px;color:#585858;letter-spacing:0.195px;">Transactions by</div>
<div class="abs nw" style="left:1236px;top:534.5px;font-size:11px;line-height:16px;color:#585858;letter-spacing:0.297px;">Invoice Item</div>
<div class="abs nw" style="left:1301.7px;top:534.5px;font-size:11px;line-height:16px;font-weight:bold;color:#585858;letter-spacing:0.554px;">Total Net</div>
<div class="abs nw" style="left:1236px;top:550.5px;font-size:11px;line-height:16px;font-weight:bold;color:#585858;letter-spacing:0.249px;">Paid</div>
<div class="abs nw" style="left:1378px;top:482px;font-size:10px;line-height:16px;color:#b5bfca;">∅</div>
<div class="abs nw" style="left:1378px;top:518.5px;font-size:11px;line-height:16px;color:#585858;letter-spacing:0.195px;">Transactions by</div>
<div class="abs nw" style="left:1378px;top:534.5px;font-size:11px;line-height:16px;color:#585858;letter-spacing:0.297px;">Invoice Item</div>
<div class="abs nw" style="left:1443.7px;top:534.5px;font-size:11px;line-height:16px;font-weight:bold;color:#585858;letter-spacing:0.554px;">Total Net</div>
<div class="abs nw" style="left:1378px;top:550.5px;font-size:11px;line-height:16px;font-weight:bold;color:#585858;letter-spacing:0.249px;">Paid</div>
<div class="abs nw" style="left:366.3px;top:518.5px;font-size:11px;line-height:16px;color:#585858;letter-spacing:0.156px;">Transactions by Invoice</div>
<div class="abs nw" style="left:366.3px;top:534.5px;font-size:11px;line-height:16px;color:#585858;letter-spacing:0.491px;">Item</div>
<div class="abs nw" style="left:392.5px;top:534.5px;font-size:11px;line-height:16px;font-weight:bold;color:#585858;letter-spacing:0.362px;">Transaction Month</div>
<svg class="abs" style="left:369px;top:553px" width="12" height="11" viewBox="0 0 12 11" ><path d="M2.5 1 H10.5 M.5 9.7 H10.5" stroke="#555" stroke-width="1.1"/><rect x="1" y="3.3" width="8.5" height="3.6" fill="none" stroke="#555" stroke-width="1"/></svg>
<svg class="abs" style="left:387px;top:555px" width="12" height="8" viewBox="0 0 12 8" ><path d="M.8 1 L5.5 6.2 L10.2 1" fill="none" stroke="#555" stroke-width="1"/></svg>
<div class="abs c nw" style="left:348px;top:571.8px;width:9.2px;text-align:right;color:#aaa">1</div>
<div class="abs c nw" style="left:366.3px;top:571.8px;color:#444">2019-07</div>
<div class="abs c nw" style="left:583px;top:571.8px;width:80px;text-align:right;letter-spacing:.05px">$1,475.58</div>
<div class="abs c nw" style="left:744.1px;top:572.8px;width:60px;text-align:right;color:#a6a6a6;font-size:9.3px">∅</div>
<div class="abs c nw" style="left:865px;top:571.8px;width:80px;text-align:right;letter-spacing:.05px">$8,303.41</div>
<div class="abs c nw" style="left:1026.1px;top:572.8px;width:60px;text-align:right;color:#a6a6a6;font-size:9.3px">∅</div>
<div class="abs c nw" style="left:1167.1px;top:572.8px;width:60px;text-align:right;color:#a6a6a6;font-size:9.3px">∅</div>
<div class="abs c nw" style="left:1309.1px;top:572.8px;width:60px;text-align:right;color:#a6a6a6;font-size:9.3px">∅</div>
<div class="abs c nw" style="left:1440.1px;top:572.8px;width:60px;text-align:right;color:#a6a6a6;font-size:9.3px">∅</div>
<div class="abs c nw" style="left:348px;top:592.9px;width:9.2px;text-align:right;color:#aaa">2</div>
<div class="abs c nw" style="left:366.3px;top:592.9px;color:#444">2019-06</div>
<div class="abs c nw" style="left:583px;top:592.9px;width:80px;text-align:right;letter-spacing:.05px">$1,395.52</div>
<div class="abs c nw" style="left:744.1px;top:593.9px;width:60px;text-align:right;color:#a6a6a6;font-size:9.3px">∅</div>
<div class="abs c nw" style="left:865px;top:592.9px;width:80px;text-align:right;letter-spacing:.05px">$12,894.63</div>
<div class="abs c nw" style="left:1026.1px;top:593.9px;width:60px;text-align:right;color:#a6a6a6;font-size:9.3px">∅</div>
<div class="abs c nw" style="left:1167.1px;top:593.9px;width:60px;text-align:right;color:#a6a6a6;font-size:9.3px">∅</div>
<div class="abs c nw" style="left:1309.1px;top:593.9px;width:60px;text-align:right;color:#a6a6a6;font-size:9.3px">∅</div>
<div class="abs c nw" style="left:1440.1px;top:593.9px;width:60px;text-align:right;color:#a6a6a6;font-size:9.3px">∅</div>
<div class="abs c nw" style="left:348px;top:614.0px;width:9.2px;text-align:right;color:#aaa">3</div>
<div class="abs c nw" style="left:366.3px;top:614.0px;color:#444">2019-05</div>
<div class="abs c nw" style="left:583px;top:614.0px;width:80px;text-align:right;letter-spacing:.05px">$1,743</div>
<div class="abs c nw" style="left:744.1px;top:615.0px;width:60px;text-align:right;color:#a6a6a6;font-size:9.3px">∅</div>
<div class="abs c nw" style="left:865px;top:614.0px;width:80px;text-align:right;letter-spacing:.05px">$10,393.78</div>
<div class="abs c nw" style="left:1026.1px;top:615.0px;width:60px;text-align:right;color:#a6a6a6;font-size:9.3px">∅</div>
<div class="abs c nw" style="left:1147px;top:614.0px;width:80px;text-align:right;letter-spacing:.05px">$134</div>
<div class="abs c nw" style="left:1309.1px;top:615.0px;width:60px;text-align:right;color:#a6a6a6;font-size:9.3px">∅</div>
<div class="abs c nw" style="left:1420px;top:614.0px;width:80px;text-align:right;letter-spacing:.05px">$62</div>
<div class="abs c nw" style="left:348px;top:635.1px;width:9.2px;text-align:right;color:#aaa">4</div>
<div class="abs c nw" style="left:366.3px;top:635.1px;color:#444">2019-04</div>
<div class="abs c nw" style="left:583px;top:635.1px;width:80px;text-align:right;letter-spacing:.05px">$1,379</div>
<div class="abs c nw" style="left:744.1px;top:636.1px;width:60px;text-align:right;color:#a6a6a6;font-size:9.3px">∅</div>
<div class="abs c nw" style="left:865px;top:635.1px;width:80px;text-align:right;letter-spacing:.05px">$9,629</div>
<div class="abs c nw" style="left:1026.1px;top:636.1px;width:60px;text-align:right;color:#a6a6a6;font-size:9.3px">∅</div>
<div class="abs c nw" style="left:1167.1px;top:636.1px;width:60px;text-align:right;color:#a6a6a6;font-size:9.3px">∅</div>
<div class="abs c nw" style="left:1289px;top:635.1px;width:80px;text-align:right;letter-spacing:.05px">$5</div>
<div class="abs c nw" style="left:1440.1px;top:636.1px;width:60px;text-align:right;color:#a6a6a6;font-size:9.3px">∅</div>
<div class="abs c nw" style="left:348px;top:656.2px;width:9.2px;text-align:right;color:#aaa">5</div>
<div class="abs c nw" style="left:366.3px;top:656.2px;color:#444">2019-03</div>
<div class="abs c nw" style="left:583px;top:656.2px;width:80px;text-align:right;letter-spacing:.05px">$1,379</div>
<div class="abs c nw" style="left:744.1px;top:657.2px;width:60px;text-align:right;color:#a6a6a6;font-size:9.3px">∅</div>
<div class="abs c nw" style="left:865px;top:656.2px;width:80px;text-align:right;letter-spacing:.05px">$10,562.52</div>
<div class="abs c nw" style="left:1026.1px;top:657.2px;width:60px;text-align:right;color:#a6a6a6;font-size:9.3px">∅</div>
<div class="abs c nw" style="left:1167.1px;top:657.2px;width:60px;text-align:right;color:#a6a6a6;font-size:9.3px">∅</div>
<div class="abs c nw" style="left:1289px;top:656.2px;width:80px;text-align:right;letter-spacing:.05px">$20</div>
<div class="abs c nw" style="left:1420px;top:656.2px;width:80px;text-align:right;letter-spacing:.05px">$100</div>
<div class="abs c nw" style="left:348px;top:677.3px;width:9.2px;text-align:right;color:#aaa">6</div>
<div class="abs c nw" style="left:366.3px;top:677.3px;color:#444">2019-02</div>
<div class="abs c nw" style="left:583px;top:677.3px;width:80px;text-align:right;letter-spacing:.05px">$2,358</div>
<div class="abs c nw" style="left:724px;top:677.3px;width:80px;text-align:right;letter-spacing:.05px">$300</div>
<div class="abs c nw" style="left:865px;top:677.3px;width:80px;text-align:right;letter-spacing:.05px">$10,659.5</div>
<div class="abs c nw" style="left:1006px;top:677.3px;width:80px;text-align:right;letter-spacing:.05px">$100</div>
<div class="abs c nw" style="left:1167.1px;top:678.3px;width:60px;text-align:right;color:#a6a6a6;font-size:9.3px">∅</div>
<div class="abs c nw" style="left:1289px;top:677.3px;width:80px;text-align:right;letter-spacing:.05px">$85</div>
<div class="abs c nw" style="left:1420px;top:677.3px;width:80px;text-align:right;letter-spacing:.05px">$20</div>
<div class="abs" style="left:1493px;top:734px;width:2px;height:2px;background:#777"></div><div class="abs" style="left:1496px;top:735px;width:2px;height:1px;background:#bbb"></div>
</body></html>
